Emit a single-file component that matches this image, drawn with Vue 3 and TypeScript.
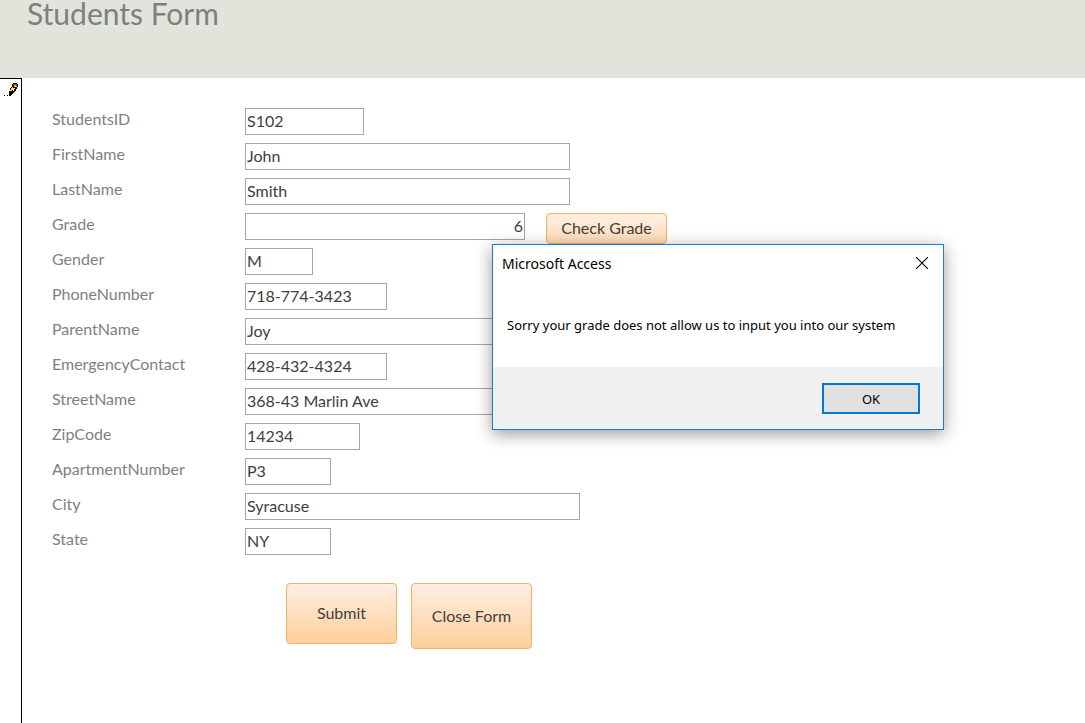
<script setup lang="ts">
import { ref } from 'vue'

interface Field {
  id: string
  value: string
  width: number
  numeric?: boolean
}

const fields = ref<Field[]>([
  { id: 'StudentsID', value: 'S102', width: 119 },
  { id: 'FirstName', value: 'John', width: 325 },
  { id: 'LastName', value: 'Smith', width: 325 },
  { id: 'Grade', value: '6', width: 280, numeric: true },
  { id: 'Gender', value: 'M', width: 68 },
  { id: 'PhoneNumber', value: '718-774-3423', width: 142 },
  { id: 'ParentName', value: 'Joy', width: 325 },
  { id: 'EmergencyContact', value: '428-432-4324', width: 142 },
  { id: 'StreetName', value: '368-43 Marlin Ave', width: 325 },
  { id: 'ZipCode', value: '14234', width: 115 },
  { id: 'ApartmentNumber', value: 'P3', width: 86 },
  { id: 'City', value: 'Syracuse', width: 335 },
  { id: 'State', value: 'NY', width: 86 },
])

const GRADE_MESSAGE = 'Sorry your grade does not allow us to input you into our system'
const message = ref(GRADE_MESSAGE)

function checkGrade() {
  const grade = Number(fields.value.find((f) => f.id === 'Grade')?.value)
  message.value = grade < 9 ? GRADE_MESSAGE : ''
}

function dismiss() {
  message.value = ''
}
</script>

<template>
  <div class="page">
    <header class="form-header">
      <h1>Students Form</h1>
    </header>

    <div class="body">
      <aside class="selector">
        <svg class="pencil" width="14" height="13" viewBox="0 0 14 13" shape-rendering="crispEdges" aria-hidden="true">
          <path d="M9 0h4v1h1v3h-1v2h-1v2h-1v1h-1v1H9v1H8v1H7v1H5V8h1V5h1V4h1V1h1z" fill="#000" />
          <path d="M9 1h4v3h-1V2H9z" fill="#d0202a" />
          <path d="M10 2h2v1h1v1h-3z" fill="#f4b080" />
          <path d="M8 4h1v1h2v1h-1v2H9V7H8v1H6V7h1V5h1z" fill="#ffee00" />
          <path d="M0 12h1v1H0zM3 12h1v1H3z" fill="#000" />
        </svg>
      </aside>

      <form class="form" @submit.prevent>
        <div v-for="field in fields" :key="field.id" class="row">
          <label :for="field.id">{{ field.id }}</label>
          <input
            :id="field.id"
            v-model="field.value"
            type="text"
            :class="{ numeric: field.numeric }"
            :style="{ width: field.width + 'px' }"
          />
          <button v-if="field.id === 'Grade'" type="button" class="btn check" @click="checkGrade">
            Check Grade
          </button>
        </div>

        <div class="actions">
          <button type="submit" class="btn submit">Submit</button>
          <button type="button" class="btn close-form">Close Form</button>
        </div>
      </form>
    </div>

    <div v-if="message" class="dialog" role="alertdialog" aria-labelledby="dialog-title" aria-describedby="dialog-text">
      <div class="title-bar">
        <span id="dialog-title">Microsoft Access</span>
        <button type="button" class="dismiss" aria-label="Close" @click="dismiss">
          <svg width="12" height="12" viewBox="0 0 12 12" aria-hidden="true">
            <path d="M0 0l12 12M12 0L0 12" stroke="#000" stroke-width="1.1" />
          </svg>
        </button>
      </div>
      <p id="dialog-text" class="message">{{ message }}</p>
      <div class="dialog-footer">
        <button type="button" class="ok" @click="dismiss">OK</button>
      </div>
    </div>
  </div>
</template>

<style>
body {
  margin: 0;
  background: #fff;
}
</style>

<style scoped>
.page {
  position: relative;
  display: flex;
  flex-direction: column;
  min-height: 100vh;
  font-family: Lato, 'Liberation Sans', sans-serif;
  font-size: 16px;
  color: #404040;
}

.page * {
  box-sizing: border-box;
}

.form-header {
  height: 78px;
  padding-left: 27px;
  background: #e0e4da;
}

h1 {
  margin: 0;
  font-size: 30px;
  font-weight: 400;
  line-height: 26px;
  color: #7f7f7f;
}

.body {
  display: flex;
  flex: 1;
}

.selector {
  width: 22px;
  padding: 4px 0 0 4px;
  border-top: 1px solid #000;
  border-right: 1px solid #000;
}

.pencil {
  display: block;
}

.form {
  flex: 1;
  padding: 30px 0 0 30px;
}

.row {
  display: flex;
  align-items: flex-start;
  height: 35px;
}

label {
  width: 193px;
  line-height: 22px;
  color: #7f7f7f;
}

input {
  height: 27px;
  padding: 0 1px 3px;
  border: 1px solid #a6a6a6;
  border-radius: 0;
  background: #fff;
  font: inherit;
  color: #404040;
  outline: none;
}

.numeric {
  text-align: right;
}

.btn {
  padding: 0 0 2px;
  border: 1px solid #f4b066;
  border-radius: 4px;
  background: linear-gradient(#feefe3, #fecf9b);
  font: inherit;
  color: #404040;
}

.check {
  width: 121px;
  height: 31px;
  margin-left: 21px;
  background: linear-gradient(#feefe1, #fddcb6);
}

.actions {
  display: flex;
  align-items: flex-start;
  gap: 14px;
  padding: 20px 0 0 234px;
}

.submit {
  width: 111px;
  height: 61px;
}

.close-form {
  width: 121px;
  height: 66px;
}

.dialog {
  position: absolute;
  top: 244px;
  left: 492px;
  width: 452px;
  border: 1px solid #1a7fd0;
  background: #fff;
  box-shadow: 0 4px 16px rgba(0, 0, 0, 0.4);
  font-family: 'Noto Sans', 'Open Sans', sans-serif;
  font-size: 13px;
  color: #000;
}

.title-bar {
  display: flex;
  align-items: center;
  justify-content: space-between;
  height: 36px;
  padding: 0 15px 0 9px;
  font-size: 14px;
}

.dismiss {
  display: flex;
  padding: 0;
  border: 0;
  background: none;
}

.message {
  margin: 0;
  padding: 34px 14px 32px;
  line-height: 20px;
}

.dialog-footer {
  display: flex;
  justify-content: flex-end;
  padding: 16px 23px 15px;
  background: #f0f0f0;
}

.ok {
  width: 98px;
  height: 31px;
  padding: 0;
  border: 2px solid #0078d7;
  background: #e1e1e1;
  font: inherit;
  color: #000;
}
</style>
